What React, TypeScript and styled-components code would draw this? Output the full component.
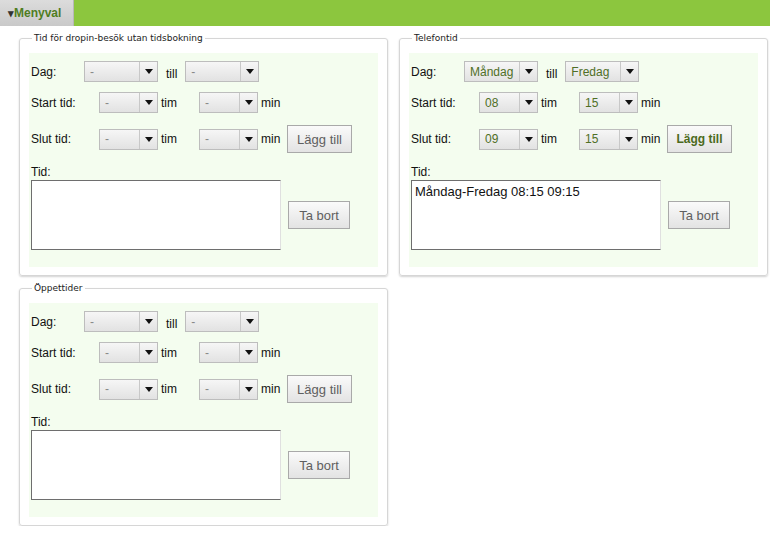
import React from "react"
import styled, { createGlobalStyle, css } from "styled-components"

const GlobalStyle = createGlobalStyle`
  html, body {
    margin: 0;
    padding: 0;
    background: #ffffff;
    font-family: "Liberation Sans", Arial, sans-serif;
    font-size: 12px;
    color: #222;
  }
`

type TimeBlock = {
  title: string
  fromDay: string
  toDay: string
  startH: string
  startM: string
  endH: string
  endM: string
  times: string
  active?: boolean
}

const blocks: TimeBlock[] = [
  { title: "Tid för dropin-besök utan tidsbokning", fromDay: "-", toDay: "-", startH: "-", startM: "-", endH: "-", endM: "-", times: "" },
  { title: "Telefontid", fromDay: "Måndag", toDay: "Fredag", startH: "08", startM: "15", endH: "09", endM: "15", times: "Måndag-Fredag 08:15 09:15", active: true },
  { title: "Öppettider", fromDay: "-", toDay: "-", startH: "-", startM: "-", endH: "-", endM: "-", times: "" },
]

const Select = ({ value, width }: { value: string; width: number }) => (
  <SelectBox $w={width}>
    <SelectValue $filled={value !== "-"}>{value}</SelectValue>
    <SelectArrow>
      <svg width="8" height="5" viewBox="0 0 8 5">
        <path d="M0 0h8L4 5z" fill="#111" />
      </svg>
    </SelectArrow>
  </SelectBox>
)

const TimeFieldset = ({ block }: { block: TimeBlock }) => (
  <Fieldset>
    <Legend>{block.title}</Legend>
    <Panel>
      <Row $mb={10}>
        <Label $w={53}>Dag:</Label>
        <Select value={block.fromDay} width={74} />
        <Till>till</Till>
        <Select value={block.toDay} width={74} />
      </Row>
      <Row $mb={12}>
        <Label $w={68}>Start tid:</Label>
        <Select value={block.startH} width={59} />
        <Unit>tim</Unit>
        <Select value={block.startM} width={59} />
        <Unit>min</Unit>
      </Row>
      <Row $mb={0} $h={28}>
        <Label $w={68}>Slut tid:</Label>
        <Select value={block.endH} width={59} />
        <Unit>tim</Unit>
        <Select value={block.endM} width={59} />
        <Unit $last>min</Unit>
        <Button $primary={block.active}>Lägg till</Button>
      </Row>
      <TidLabel>Tid:</TidLabel>
      <TidRow>
        <TimesBox>{block.times}</TimesBox>
        <Button $narrow>Ta bort</Button>
      </TidRow>
    </Panel>
  </Fieldset>
)

export default function App() {
  return (
    <>
      <GlobalStyle />
      <TopBar>
        <MenuTab>
          <Caret>▾</Caret>Menyval
        </MenuTab>
      </TopBar>
      <Grid>
        {blocks.map((b) => (
          <TimeFieldset key={b.title} block={b} />
        ))}
      </Grid>
    </>
  )
}

const TopBar = styled.div`
  display: flex;
  height: 26px;
  background: #8cc63e;
`

const MenuTab = styled.div`
  display: flex;
  align-items: center;
  width: 74px;
  box-sizing: border-box;
  padding-left: 8px;
  background: linear-gradient(#dcdcdc, #c9c9c9);
  border-right: 1px solid #b8b8b8;
  font-weight: bold;
  font-size: 12px;
  color: #4f7d1f;
`

const Caret = styled.span`
  color: #333;
  font-size: 11px;
`

const Grid = styled.div`
  display: grid;
  grid-template-columns: 369px 369px;
  column-gap: 11px;
  row-gap: 7px;
  align-items: start;
  padding: 7px 0 0 19px;
`

const Fieldset = styled.fieldset`
  margin: 0;
  padding: 0 9px 8px 9px;
  border: 1px solid #d6d6d6;
  border-radius: 3px;
  box-shadow: 0 1px 2px rgba(0, 0, 0, 0.18);
`

const Legend = styled.legend`
  margin-left: 3px;
  padding: 0 2px;
  font-family: "DejaVu Sans", Verdana, sans-serif;
  font-size: 9px;
  line-height: 11px;
  color: #222;
`

const Panel = styled.div`
  margin-top: 9px;
  padding: 8px 0 17px 2px;
  background: #f4fdef;
`

const Row = styled.div<{ $mb: number; $h?: number }>`
  display: flex;
  align-items: center;
  height: ${(p) => p.$h ?? 21}px;
  margin-bottom: ${(p) => p.$mb}px;
`

const Label = styled.span<{ $w: number }>`
  width: ${(p) => p.$w}px;
  flex-shrink: 0;
  color: #111;
`

const SelectBox = styled.div<{ $w: number }>`
  display: flex;
  width: ${(p) => p.$w}px;
  height: 21px;
  box-sizing: border-box;
  border: 1px solid #bdbdbd;
  background: linear-gradient(#f6f6f6, #e2e2e2);
`

const SelectValue = styled.span<{ $filled: boolean }>`
  flex: 1;
  display: flex;
  align-items: center;
  padding-left: 5px;
  color: ${(p) => (p.$filled ? "#4f6f26" : "#888")};
  font-size: 12px;
`

const SelectArrow = styled.span`
  display: flex;
  align-items: center;
  justify-content: center;
  width: 17px;
  border-left: 1px solid #c8c8c8;
`

const Till = styled.span`
  margin: 4px 8px 0 8px;
  color: #111;
`

const Unit = styled.span<{ $last?: boolean }>`
  margin-left: 3px;
  width: ${(p) => (p.$last ? 26 : 38)}px;
  color: #111;
`

const Button = styled.button<{ $primary?: boolean; $narrow?: boolean }>`
  width: ${(p) => (p.$narrow ? 62 : 65)}px;
  height: 28px;
  padding: 0;
  border: 1px solid #a9a9a9;
  border-radius: 0;
  background: linear-gradient(#fafafa, #e3e3e3);
  font-family: "Liberation Sans", Arial, sans-serif;
  font-size: 13px;
  font-weight: normal;
  color: #5f5f5f;
  ${(p) =>
    p.$primary &&
    css`
      font-size: 12px;
      font-weight: bold;
      color: #4b6a1c;
    `}
`

const TidLabel = styled.div`
  margin-top: 11px;
  line-height: 16px;
  color: #111;
`

const TidRow = styled.div`
  display: flex;
  align-items: center;
  gap: 7px;
`

const TimesBox = styled.div`
  width: 250px;
  height: 70px;
  box-sizing: border-box;
  padding: 3px 3px;
  background: #ffffff;
  border: 1px solid #6e6e6e;
  border-right-color: #e0e0e0;
  font-size: 13px;
  color: #111;
`
